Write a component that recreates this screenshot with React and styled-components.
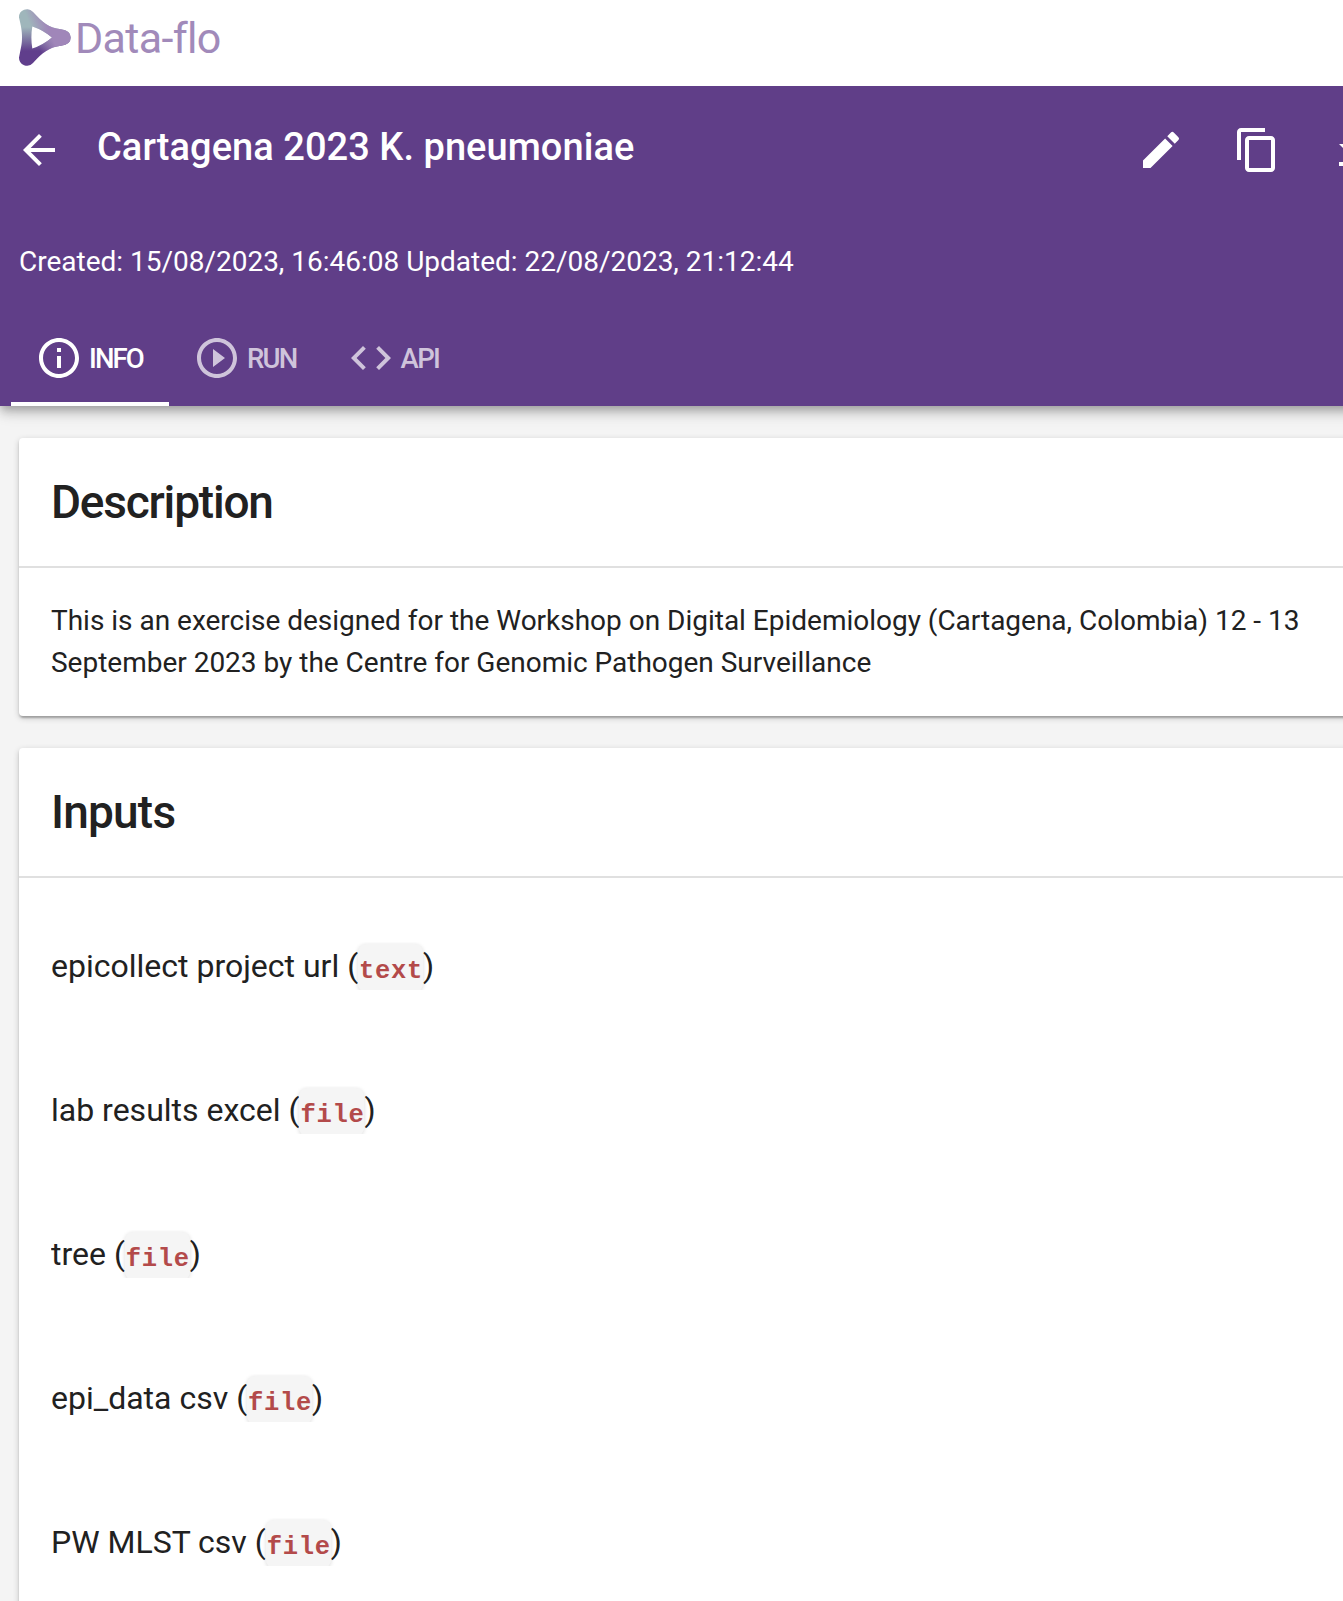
import React from "react";
import styled, { createGlobalStyle } from "styled-components";

const GlobalStyle = createGlobalStyle`
  * { box-sizing: border-box; }
  body {
    margin: 0;
    background: #f4f4f4;
    color: #212121;
    font-family: Roboto, "Liberation Sans", sans-serif;
    overflow: hidden;
  }
`;

const Page = styled.div`
  height: 1601px;
  overflow: hidden;
`;

const BrandBar = styled.header`
  position: relative;
  z-index: 2;
  display: flex;
  align-items: flex-start;
  height: 86px;
  padding: 8px 0 0 18px;
  background: #fff;
`;

const BrandMark = styled.svg`
  width: 54px;
  height: 60px;
  flex: none;
`;

const BrandName = styled.span`
  margin-left: 3px;
  color: #a18aba;
  font-size: 43px;
  line-height: 60px;
  letter-spacing: ${(p) => p.$tracking}px;
  white-space: nowrap;
`;

const Banner = styled.section`
  position: relative;
  z-index: 1;
  display: flex;
  flex-direction: column;
  height: 320px;
  width: 1450px;
  background: #603e88;
  color: #fff;
  box-shadow: 0 4px 8px -2px rgba(0, 0, 0, 0.2), 0 8px 10px rgba(0, 0, 0, 0.14),
    0 2px 20px rgba(0, 0, 0, 0.12);
`;

const Toolbar = styled.div`
  display: flex;
  align-items: center;
  height: 128px;
  padding-left: 15px;
`;

const Title = styled.h1`
  flex: 0 0 1074px;
  margin: -6px 0 0;
  padding-left: 34px;
  font-size: 38px;
  font-weight: 500;
  line-height: 56px;
  letter-spacing: ${(p) => p.$tracking}px;
  white-space: nowrap;
`;

const Actions = styled.div`
  display: flex;
  gap: 48px;
`;

const Glyph = styled.svg`
  display: block;
  flex: none;
  width: 48px;
  height: 48px;
  fill: currentColor;
`;

const Meta = styled.p`
  margin: 27px 0 0 19px;
  font-size: 28px;
  line-height: 42px;
  letter-spacing: -0.01px;
`;

const Tabs = styled.nav`
  display: flex;
  margin-top: auto;
  padding-left: 11px;
`;

const Tab = styled.div`
  display: flex;
  align-items: center;
  gap: 6px;
  height: 96px;
  width: ${(p) => p.$width}px;
  padding: 4px 0 0 24px;
  border-bottom: 4px solid ${(p) => (p.$active ? "#fff" : "transparent")};
  color: ${(p) => (p.$active ? "#fff" : "#cfc4db")};
  font-size: 27.5px;
  font-weight: 500;
  letter-spacing: ${(p) => p.$tracking}px;
`;

const Cards = styled.main`
  display: flex;
  flex-direction: column;
  gap: 32px;
  width: 1380px;
  padding: 32px 0 0 19px;
`;

const Card = styled.section`
  min-height: ${(p) => p.$minHeight}px;
  border-radius: 4px;
  background: #fff;
  box-shadow: 0 2px 6px rgba(0, 0, 0, 0.2), 0 2px 2px rgba(0, 0, 0, 0.14),
    0 4px 2px -2px rgba(0, 0, 0, 0.12);
`;

const CardTitle = styled.h2`
  height: 130px;
  margin: 0;
  padding-left: 32px;
  border-bottom: 2px solid #e0e0e0;
  font-size: 46px;
  font-weight: 500;
  line-height: 128px;
  letter-spacing: ${(p) => p.$tracking}px;
`;

const Summary = styled.p`
  width: 1324px;
  margin: 0;
  padding: 32px;
  font-size: 28px;
  line-height: 42px;
  letter-spacing: -0.01px;
`;

const InputList = styled.div`
  display: flex;
  flex-direction: column;
  gap: 96px;
  padding: 64px 32px;
`;

const InputRow = styled.div`
  height: 48px;
  overflow: hidden;
  font-size: 32px;
  line-height: 48px;
  white-space: nowrap;
`;

const TypeTag = styled.code`
  display: inline-block;
  height: 48px;
  margin-top: 2px;
  padding-left: 1px;
  border-radius: 8px;
  background: #f5f5f5;
  box-shadow: 0 1px 4px rgba(0, 0, 0, 0.14);
  color: #b34a4a;
  font-family: "Liberation Mono", monospace;
  font-size: 25.5px;
  font-weight: 700;
  line-height: 55px;
  letter-spacing: 0.7px;
  vertical-align: top;
`;

const paths = {
  back: "M20 11H7.83l5.59-5.59L12 4l-8 8 8 8 1.41-1.41L7.83 13H20v-2z",
  edit: "M3 17.25V21h3.75L17.81 9.94l-3.75-3.75L3 17.25zM20.71 7.04a.996.996 0 0 0 0-1.41l-2.34-2.34a.996.996 0 0 0-1.41 0l-1.83 1.83 3.75 3.75 1.83-1.83z",
  copy: "M16 1H4c-1.1 0-2 .9-2 2v14h2V3h12V1zm3 4H8c-1.1 0-2 .9-2 2v14c0 1.1.9 2 2 2h11c1.1 0 2-.9 2-2V7c0-1.1-.9-2-2-2zm0 16H8V7h11v14z",
  download: "M19 9h-4V3H9v6H5l7 7 7-7zM5 18v2h14v-2H5z",
  info: "M11 17h2v-6h-2v6zm1-15C6.48 2 2 6.48 2 12s4.48 10 10 10 10-4.48 10-10S17.52 2 12 2zm0 18c-4.41 0-8-3.59-8-8s3.59-8 8-8 8 3.59 8 8-3.59 8-8 8zM11 9h2V7h-2v2z",
  run: "M10 16.5l6-4.5-6-4.5v9zM12 2C6.48 2 2 6.48 2 12s4.48 10 10 10 10-4.48 10-10S17.52 2 12 2zm0 18c-4.41 0-8-3.59-8-8s3.59-8 8-8 8 3.59 8 8-3.59 8-8 8z",
  api: "M9.4 16.6L4.8 12l4.6-4.6L8 6l-6 6 6 6 1.4-1.4zm5.2 0l4.6-4.6-4.6-4.6L16 6l6 6-6 6-1.4-1.4z",
};

function Icon({ name }) {
  return (
    <Glyph viewBox="0 0 24 24" aria-hidden="true">
      <path d={paths[name]} />
    </Glyph>
  );
}

const outline =
  "M1 9.5A8 8 0 0 1 15 4C24 14 31 20 43 21.3Q52.7 22.5 52.7 29.5Q52.7 36.5 43 37.7C31 39 24 45 15 55A8 8 0 0 1 1 49.5C3 39 4 36 4 29.5C4 23 3 18 1 9.5ZM14.3 18.5Q12.5 29.5 14.3 40.5Q25 37 34 29.5Q25 22 14.3 18.5Z";

function Logo() {
  return (
    <BrandMark viewBox="0 0 54 60" aria-hidden="true">
      <defs>
        <linearGradient id="spine" gradientUnits="userSpaceOnUse" x1="0" y1="19" x2="0" y2="43">
          <stop offset="0" stopColor="#9fb6bb" />
          <stop offset="1" stopColor="#603e8c" />
        </linearGradient>
        <linearGradient id="tip" gradientUnits="userSpaceOnUse" x1="16" y1="27" x2="31" y2="21">
          <stop offset="0" stopColor="#a086b9" stopOpacity="0" />
          <stop offset="1" stopColor="#a086b9" />
        </linearGradient>
      </defs>
      <path d={outline} fill="url(#spine)" fillRule="evenodd" />
      <path d={outline} fill="url(#tip)" fillRule="evenodd" />
    </BrandMark>
  );
}

const tabs = [
  { icon: "info", label: "INFO", width: 158, tracking: -1.9, active: true },
  { icon: "run", label: "RUN", width: 153.5, tracking: -1.8 },
  { icon: "api", label: "API", width: 144, tracking: -1.6 },
];

const inputs = [
  ["epicollect project url", "text"],
  ["lab results excel", "file"],
  ["tree", "file"],
  ["epi_data csv", "file"],
  ["PW MLST csv", "file"],
];

export default function App() {
  return (
    <Page>
      <GlobalStyle />
      <BrandBar>
        <Logo />
        <BrandName $tracking={-0.65}>Data-flo</BrandName>
      </BrandBar>
      <Banner>
        <Toolbar>
          <Icon name="back" />
          <Title $tracking={0.05}>Cartagena 2023 K. pneumoniae</Title>
          <Actions>
            <Icon name="edit" />
            <Icon name="copy" />
            <Icon name="download" />
          </Actions>
        </Toolbar>
        <Meta>Created: 15/08/2023, 16:46:08 Updated: 22/08/2023, 21:12:44</Meta>
        <Tabs>
          {tabs.map((t) => (
            <Tab key={t.label} $width={t.width} $tracking={t.tracking} $active={t.active}>
              <Icon name={t.icon} />
              {t.label}
            </Tab>
          ))}
        </Tabs>
      </Banner>
      <Cards>
        <Card $minHeight={278}>
          <CardTitle $tracking={-1.2}>Description</CardTitle>
          <Summary>
            This is an exercise designed for the Workshop on Digital Epidemiology (Cartagena, Colombia) 12 - 13
            September 2023 by the Centre for Genomic Pathogen Surveillance
          </Summary>
        </Card>
        <Card $minHeight={900}>
          <CardTitle $tracking={-0.8}>Inputs</CardTitle>
          <InputList>
            {inputs.map(([name, type]) => (
              <InputRow key={name}>
                {name} (<TypeTag>{type}</TypeTag>)
              </InputRow>
            ))}
          </InputList>
        </Card>
      </Cards>
    </Page>
  );
}
